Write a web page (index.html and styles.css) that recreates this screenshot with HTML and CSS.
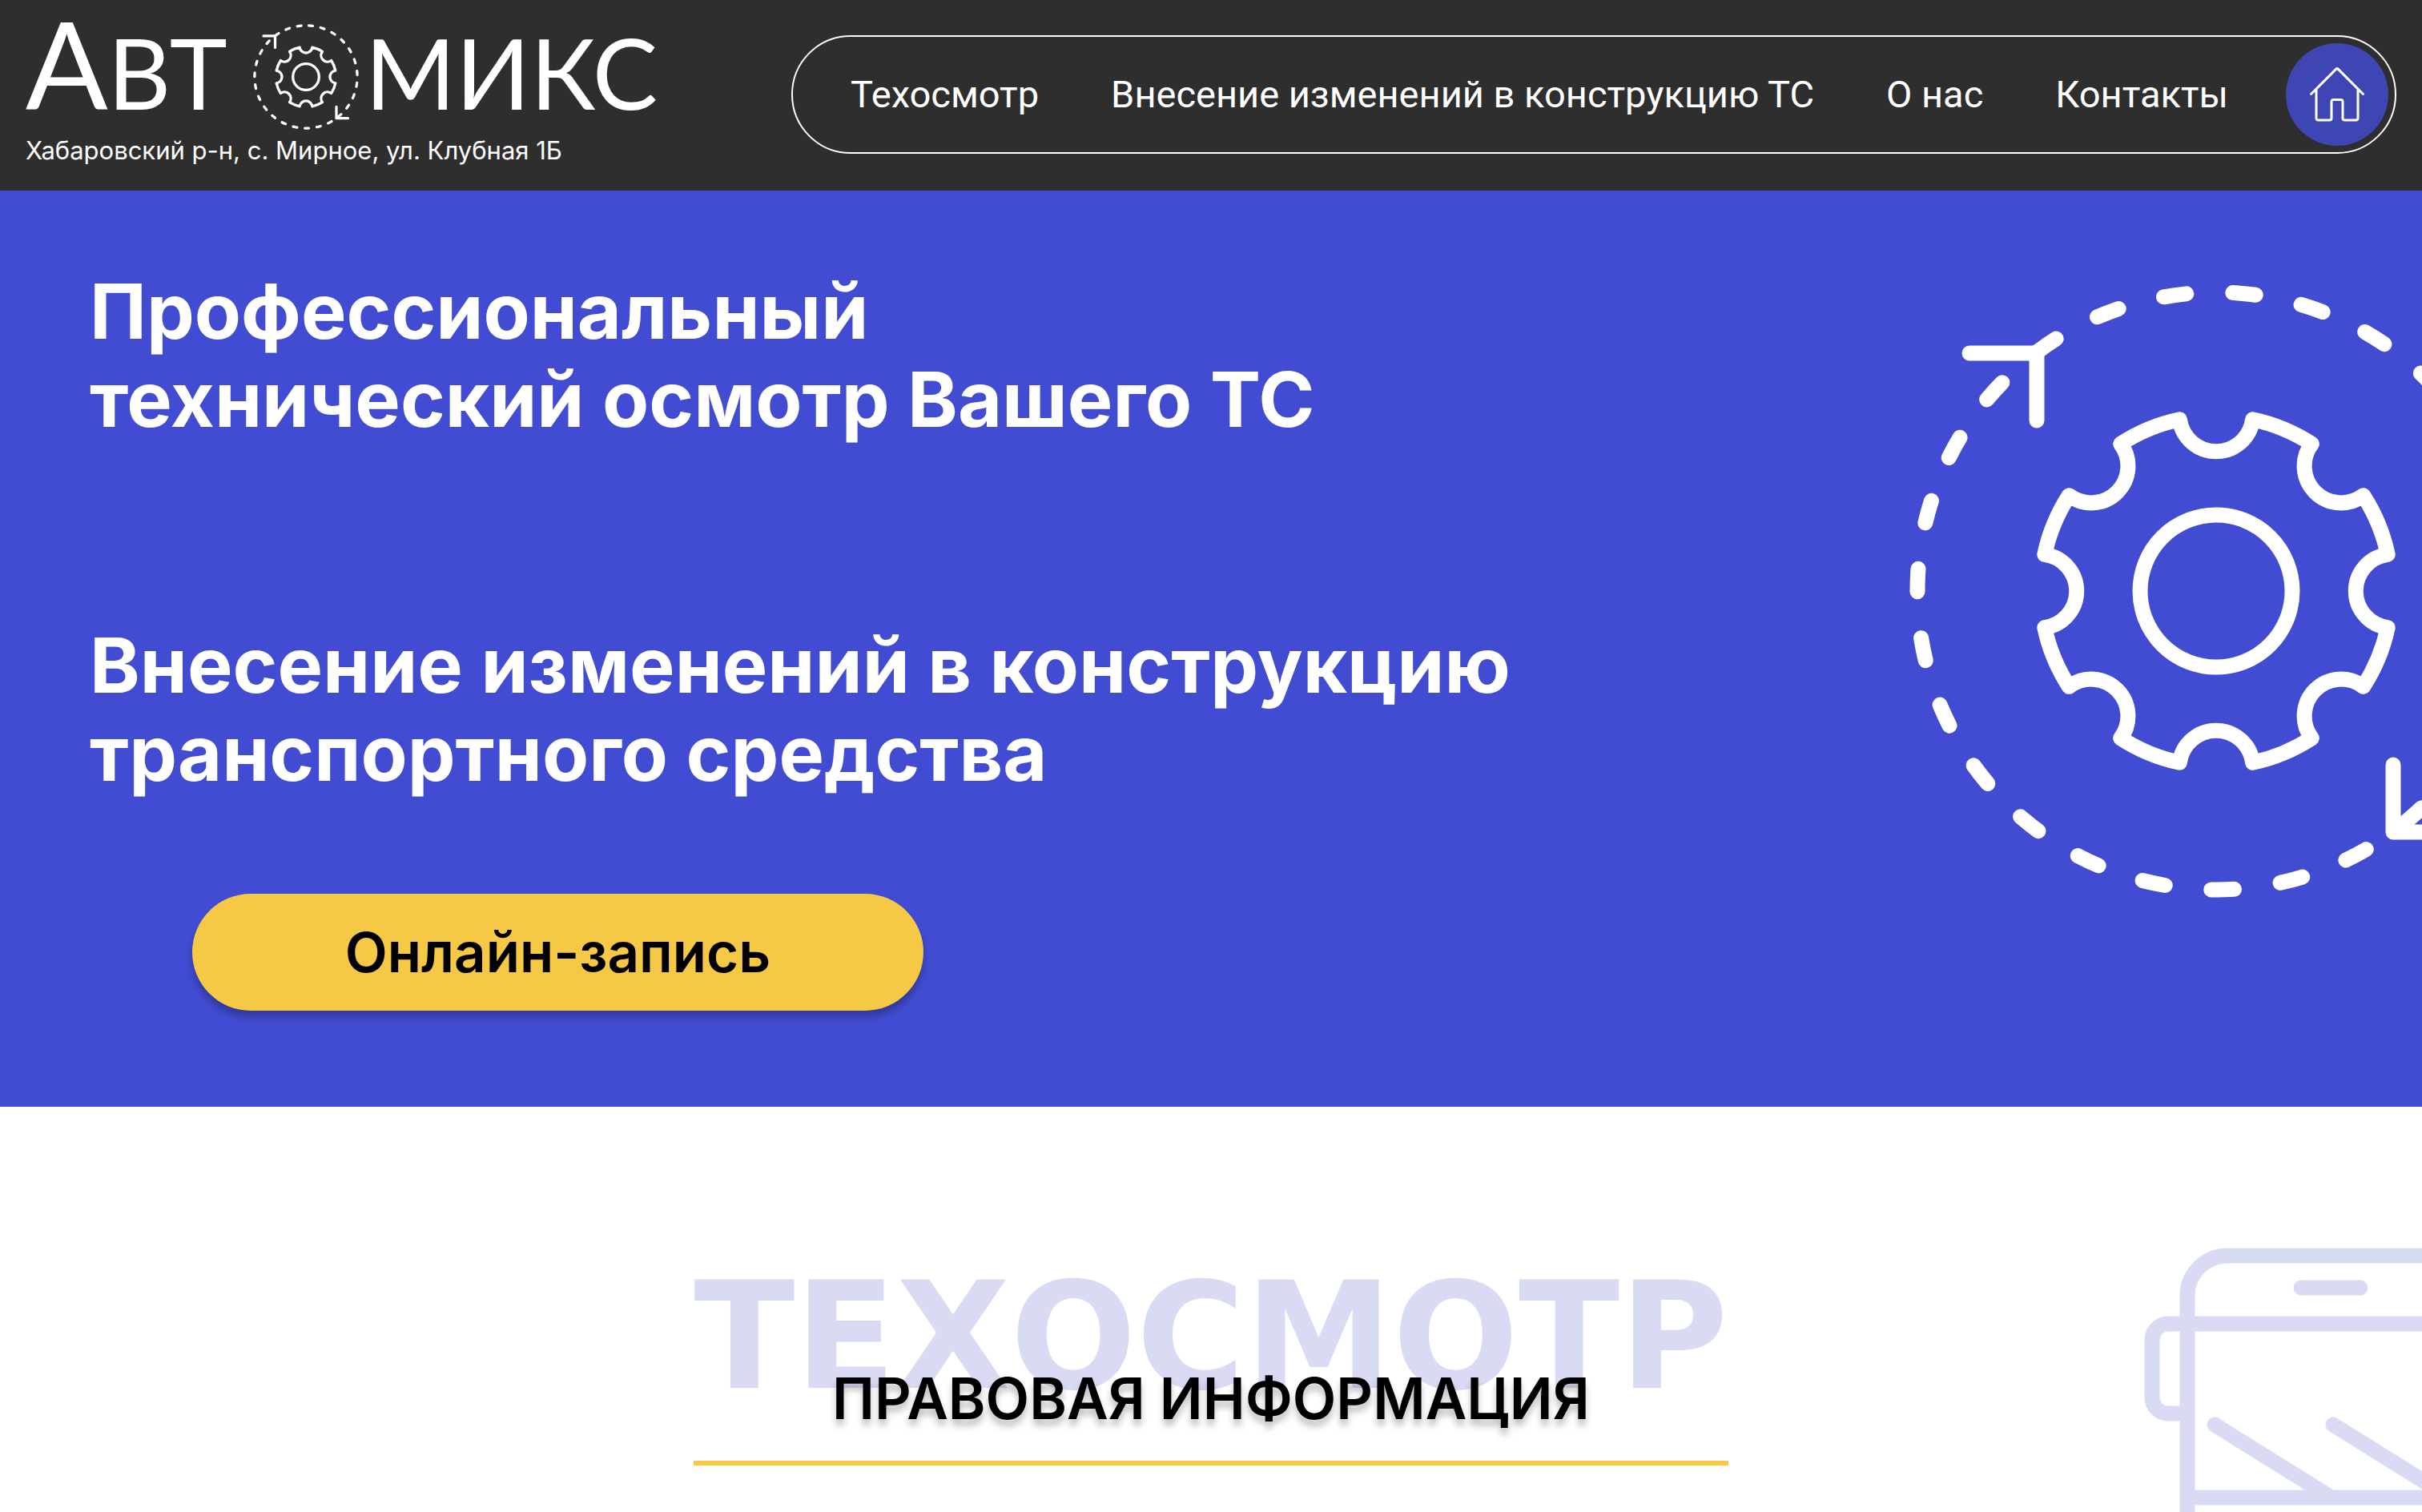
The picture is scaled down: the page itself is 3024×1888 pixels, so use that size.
FILE: index.html
```
<!DOCTYPE html>
<html lang="ru">
<head>
<meta charset="utf-8">
<meta name="viewport" content="width=device-width, initial-scale=1">
<title>Автомикс</title>
<link rel="stylesheet" href="styles.css">
</head>
<body>
<svg class="sprite" aria-hidden="true">
  <symbol id="gear" viewBox="-384 -384 768 768">
    <g fill="none" stroke="currentColor" stroke-width="19" stroke-linecap="round" stroke-linejoin="round">
      <circle r="373" pathLength="360" stroke-dasharray="4.4 8.93333" transform="rotate(-86.8)"/>
      <path d="M-308 -297H-224V-213M221 217V301H305"/>
      <circle r="95"/>
      <path d="M-45.6 -214.2A46 46 0 0 0 45.6 -214.2A219 219 0 0 1 119.3 -183.7A46 46 0 0 0 183.7 -119.3A219 219 0 0 1 214.2 -45.6A46 46 0 0 0 214.2 45.6A219 219 0 0 1 183.7 119.3A46 46 0 0 0 119.3 183.7A219 219 0 0 1 45.6 214.2A46 46 0 0 0 -45.6 214.2A219 219 0 0 1 -119.3 183.7A46 46 0 0 0 -183.7 119.3A219 219 0 0 1 -214.2 45.6A46 46 0 0 0 -214.2 -45.6A219 219 0 0 1 -183.7 -119.3A46 46 0 0 0 -119.3 -183.7A219 219 0 0 1 -45.6 -214.2Z"/>
    </g>
  </symbol>
</svg>

<header class="header">
  <div class="brand">
    <a class="logo" href="#" aria-label="Автомикс">
      <span class="logo-text"><span class="logo-initial">А</span>ВТ</span>
      <svg class="logo-gear" aria-hidden="true"><use href="#gear"/></svg>
      <span class="logo-text">МИКС</span>
    </a>
    <p class="address">Хабаровский р-н, с. Мирное, ул. Клубная 1Б</p>
  </div>
  <nav class="nav">
    <ul class="nav-list">
      <li><a href="#inspection">Техосмотр</a></li>
      <li><a href="#changes">Внесение изменений в конструкцию ТС</a></li>
      <li><a href="#about">О нас</a></li>
      <li><a href="#contacts">Контакты</a></li>
    </ul>
    <a class="home" href="#" aria-label="Главная">
      <svg class="home-icon" viewBox="-40 -40 80 80" aria-hidden="true">
        <path d="M-32.5 -0.5L-1.4 -31.6Q0 -33 1.4 -31.6L32.5 -0.5M-26 -6V29.500Q-26 32 -23.500 32H-9.500Q-7 32 -7 29.500V9Q-7 6.500 -4.500 6.500H4.500Q7 6.500 7 9V29.500Q7 32 9.500 32H23.500Q26 32 26 29.500V-6"/>
      </svg>
    </a>
  </nav>
</header>

<main class="main">
  <section class="hero">
    <div class="hero-content">
      <h1 class="hero-title">Профессиональный<br>технический осмотр Вашего ТС</h1>
      <h2 class="hero-title">Внесение изменений в конструкцию<br>транспортного средства</h2>
      <button class="booking" type="button">Онлайн-запись</button>
    </div>
    <svg class="hero-gear" aria-hidden="true"><use href="#gear"/></svg>
  </section>

  <section class="inspection" id="inspection">
    <div class="heading">
      <p class="heading-back">ТЕХОСМОТР</p>
      <h2 class="heading-front">ПРАВОВАЯ ИНФОРМАЦИЯ</h2>
    </div>
    <svg class="bus" viewBox="0 0 600 330" aria-hidden="true">
      <path d="M54 340V60A50 50 0 0 1 104 10H496A50 50 0 0 1 546 60V340M54 207H30A20 20 0 0 1 10 187V115A20 20 0 0 1 30 95H570A20 20 0 0 1 590 115V187A20 20 0 0 1 570 207H546M196 50H270M88 221L234 312M236 221L382 312M54 312H546"/>
    </svg>
  </section>
</main>
</body>
</html>
```
FILE: styles.css
```
* {
  box-sizing: border-box;
  margin: 0;
  padding: 0;
}

body {
  display: flex;
  flex-direction: column;
  min-height: 100vh;
  font-family: "Inter", sans-serif;
  color: #000;
  background: #fff;
}

a {
  color: inherit;
  text-decoration: none;
}

.sprite {
  position: absolute;
  width: 0;
  height: 0;
}

.header {
  display: flex;
  align-items: flex-start;
  padding: 28px 32px 0;
  height: 238px;
  color: #fff;
  background: #2e2e2e;
}

.brand {
  flex: 0 0 956px;
}

.logo {
  display: flex;
  align-items: baseline;
  height: 136px;
  white-space: nowrap;
}

.logo-text {
  font-family: "Lato", sans-serif;
  font-size: 122px;
  line-height: 100px;
}

.logo-initial {
  font-size: 152px;
}

.logo-gear {
  flex: none;
  align-self: center;
  width: 132px;
  height: 132px;
  margin: 0 8px 0 32px;
}

.address {
  font-size: 31px;
  line-height: 48px;
}

.nav {
  display: flex;
  flex: 1;
  align-items: center;
  height: 148px;
  margin-top: 16px;
  padding: 0 8px 0 72px;
  border: 2px solid #fff;
  border-radius: 74px;
}

.nav-list {
  display: flex;
  flex: 1;
  justify-content: space-between;
  margin-right: 72px;
  list-style: none;
  font-family: "Roboto", sans-serif;
  font-size: 47px;
  line-height: 56px;
  white-space: nowrap;
}

.home {
  display: grid;
  place-items: center;
  width: 128px;
  height: 128px;
  border-radius: 50%;
  background: #3d46b2;
}

.home-icon {
  width: 80px;
  height: 80px;
  fill: none;
  stroke: #fff;
  stroke-width: 3;
  stroke-linecap: round;
  stroke-linejoin: round;
}

.main {
  display: flex;
  flex: 1;
  flex-direction: column;
}

.hero {
  display: flex;
  justify-content: space-between;
  padding: 96px 0 120px 112px;
  overflow: hidden;
  color: #fff;
  background: #414cd2;
}

.hero-title {
  margin-bottom: 222px;
  font-size: 95px;
  font-weight: 700;
  line-height: 110px;
}

.hero-title + .hero-title {
  margin-bottom: 120px;
}

.booking {
  display: block;
  width: 913px;
  height: 146px;
  margin-left: 128px;
  border: 0;
  border-radius: 73px;
  font-family: inherit;
  font-size: 69px;
  font-weight: 600;
  color: #000;
  background: #f5c945;
  box-shadow: 0 8px 8px rgba(0, 0, 0, 0.25);
}

.hero-gear {
  flex: none;
  width: 768px;
  height: 768px;
  margin: 20px -127px 0 0;
}

.inspection {
  display: grid;
  flex: 1;
  grid-template-columns: 1fr auto 1fr;
  align-items: start;
  padding-top: 176px;
  overflow: hidden;
}

.heading {
  grid-column: 2;
  margin-top: 11px;
  padding-bottom: 38px;
  border-bottom: 6px solid #f5c945;
  text-align: center;
}

.heading-back {
  font-family: "DejaVu Sans", sans-serif;
  font-size: 185px;
  font-weight: 700;
  line-height: 200px;
  color: #d9dbf5;
}

.heading-front {
  position: relative;
  margin-top: -63px;
  font-size: 71px;
  font-weight: 600;
  line-height: 80px;
  text-shadow: 0 8px 8px rgba(0, 0, 0, 0.25);
}

.bus {
  justify-self: end;
  width: 600px;
  height: 330px;
  margin-right: -253px;
  fill: none;
  stroke: #d9dbf5;
  stroke-width: 19;
  stroke-linecap: round;
  stroke-linejoin: round;
}
```
